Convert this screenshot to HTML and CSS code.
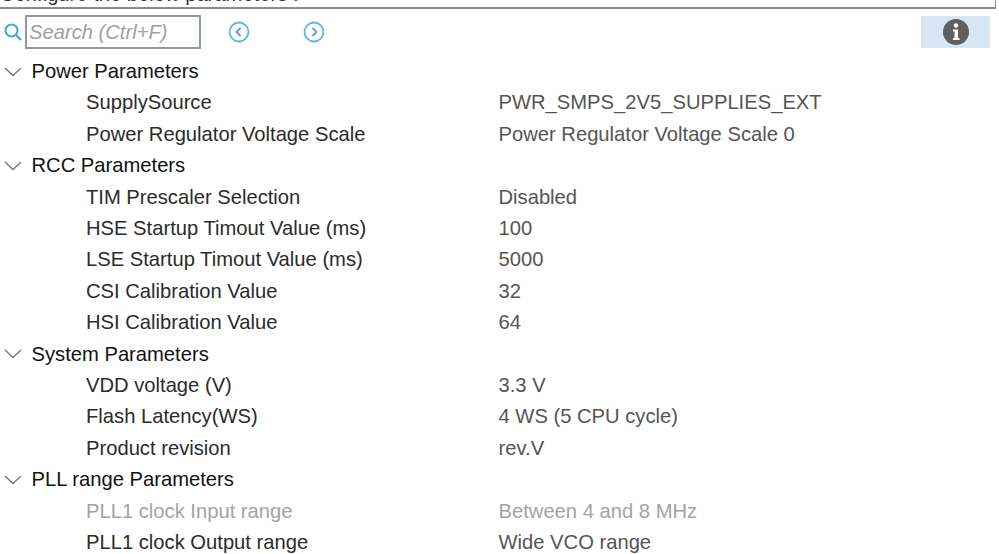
FILE: index.html
```html
<!DOCTYPE html>
<html lang="en">
<head>
  <meta charset="UTF-8" />
  <title>Parameter Settings</title>
  <link rel="stylesheet" href="styles.css">
</head>
<body>
  <div class="caption"><span>Configure the below parameters :</span></div>

  <div class="toolbar">
    <svg class="search-icon" width="18" height="18" viewBox="0 0 18 18">
      <circle cx="7.5" cy="7.5" r="6" fill="none" stroke="#3fa9dc" stroke-width="2"/>
      <path d="M11.5 11.5 L17 17" stroke="#3fa9dc" stroke-width="2.2"/>
    </svg>
    <div class="search-box">Search (Ctrl+F)</div>
    <svg class="nav prev" width="22" height="22" viewBox="0 0 22 22">
      <circle cx="11" cy="11" r="9.5" fill="none" stroke="#5bb8e6" stroke-width="1.8"/>
      <path d="M12.5 7 L8.5 11 L12.5 15" fill="none" stroke="#5b9fc0" stroke-width="1.8"/>
    </svg>
    <svg class="nav next" width="22" height="22" viewBox="0 0 22 22">
      <circle cx="11" cy="11" r="9.5" fill="none" stroke="#5bb8e6" stroke-width="1.8"/>
      <path d="M9.5 7 L13.5 11 L9.5 15" fill="none" stroke="#5b9fc0" stroke-width="1.8"/>
    </svg>
    <div class="info-btn">
      <svg width="26" height="26" viewBox="0 0 26 26">
        <circle cx="13" cy="13" r="13" fill="#5f5f5f"/>
        <circle cx="13" cy="6.5" r="2.2" fill="#fff"/>
        <path d="M10 10.5 H15 V19 H16.5 V21 H10 V19 H11.5 V12.5 H10 Z" fill="#fff"/>
      </svg>
    </div>
  </div>

  <div class="tree">
    <div class="row group"><svg class="chev" width="18" height="10" viewBox="0 0 18 10"><path d="M1 1 L9 8.5 L17 1" fill="none" stroke="#777" stroke-width="1.4"/></svg><span>Power Parameters</span></div>
    <div class="row"><span class="name">SupplySource</span><span class="value">PWR_SMPS_2V5_SUPPLIES_EXT</span></div>
    <div class="row"><span class="name">Power Regulator Voltage Scale</span><span class="value">Power Regulator Voltage Scale 0</span></div>

    <div class="row group"><svg class="chev" width="18" height="10" viewBox="0 0 18 10"><path d="M1 1 L9 8.5 L17 1" fill="none" stroke="#777" stroke-width="1.4"/></svg><span>RCC Parameters</span></div>
    <div class="row"><span class="name">TIM Prescaler Selection</span><span class="value">Disabled</span></div>
    <div class="row"><span class="name">HSE Startup Timout Value (ms)</span><span class="value">100</span></div>
    <div class="row"><span class="name">LSE Startup Timout Value (ms)</span><span class="value">5000</span></div>
    <div class="row"><span class="name">CSI Calibration Value</span><span class="value">32</span></div>
    <div class="row"><span class="name">HSI Calibration Value</span><span class="value">64</span></div>

    <div class="row group"><svg class="chev" width="18" height="10" viewBox="0 0 18 10"><path d="M1 1 L9 8.5 L17 1" fill="none" stroke="#777" stroke-width="1.4"/></svg><span>System Parameters</span></div>
    <div class="row"><span class="name">VDD voltage (V)</span><span class="value">3.3 V</span></div>
    <div class="row"><span class="name">Flash Latency(WS)</span><span class="value">4 WS (5 CPU cycle)</span></div>
    <div class="row"><span class="name">Product revision</span><span class="value">rev.V</span></div>

    <div class="row group"><svg class="chev" width="18" height="10" viewBox="0 0 18 10"><path d="M1 1 L9 8.5 L17 1" fill="none" stroke="#777" stroke-width="1.4"/></svg><span>PLL range Parameters</span></div>
    <div class="row disabled"><span class="name">PLL1 clock Input range</span><span class="value">Between 4 and 8 MHz</span></div>
    <div class="row"><span class="name">PLL1 clock Output range</span><span class="value">Wide VCO range</span></div>
  </div>
</body>
</html>
```

FILE: styles.css
```css
* { box-sizing: border-box; margin: 0; padding: 0; }
html, body { height: 554px; overflow: hidden; }
body {
  font-family: "Liberation Sans", Arial, sans-serif;
  font-size: 20.2px;
  color: #1a1a1a;
  background: #fff;
}

/* CAPTION, cut off by the top of the window */
.caption {
  height: 9px;
  margin-right: 3px;
  border-bottom: 2px solid #8c8c8c;
  border-right: 1px solid #8c8c8c;
  overflow: hidden;
  display: flex;
  align-items: flex-end;
  line-height: 20px;
  color: #333;
}
.caption span { display: block; white-space: nowrap; margin-bottom: 3px; }

/* TOOLBAR */
.toolbar {
  display: flex;
  align-items: center;
  height: 39px;
  margin-top: 3px;
  padding-left: 4px;
}
.search-icon { flex: none; margin-right: 3px; }
.search-box {
  width: 176px;
  height: 34px;
  border: 2px solid #8e99a3;
  padding-left: 2px;
  line-height: 31px;
  font-style: italic;
  color: #a0a0a0;
}
.nav { flex: none; }
.prev { margin-left: 27px; }
.next { margin-left: 53px; }
.info-btn {
  margin-left: auto;
  margin-right: 9px;
  width: 69px;
  height: 32px;
  background: #d6e6f4;
  display: flex;
  align-items: center;
  justify-content: center;
}

/* TREE */
.tree { margin-top: 4.9px; }
.row {
  display: flex;
  align-items: center;
  height: 31.4px;
  white-space: nowrap;
}
.row .name { width: 498.5px; padding-left: 86px; color: #2b2b2b; }
.row .value { color: #555; }
.row.group { padding-left: 4px; color: #111; }
.chev { flex: none; margin-right: 9.5px; }
.row.disabled .name, .row.disabled .value { color: #a3a3a3; }
```
